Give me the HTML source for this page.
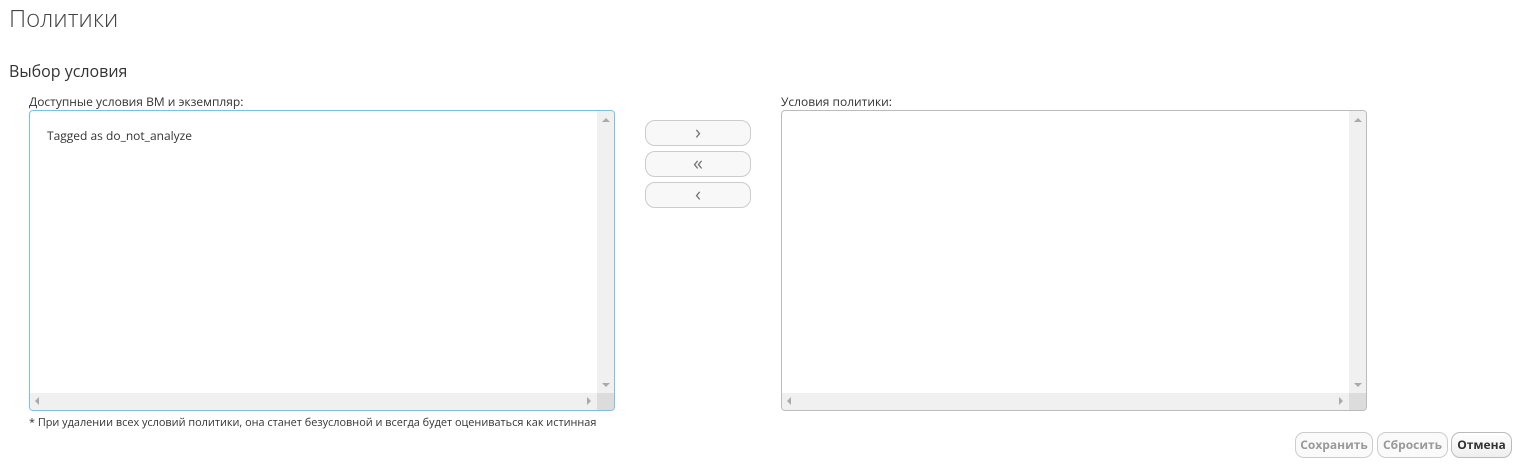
<!DOCTYPE html>
<html><head><meta charset="utf-8"><style>
body{margin:0;width:1522px;height:465px;background:#fff;font-family:"Open Sans","Liberation Sans","DejaVu Sans",sans-serif;color:#333;position:relative;overflow:hidden}
.a{position:absolute}
.box{position:absolute;border:1px solid #bbb;border-radius:4px;background:#fff;overflow:hidden;box-sizing:border-box}
.vs{position:absolute;right:0;top:0;width:17px;bottom:17px;background:#f0f0f0}
.hs{position:absolute;left:0;bottom:0;height:17px;right:17px;background:#f0f0f0}
.cr{position:absolute;right:0;bottom:0;width:17px;height:17px;background:#dcdcdc}
.tri{position:absolute;width:0;height:0}
.btn{position:absolute;box-sizing:border-box;border:1px solid #ccc;border-radius:10px;background:#f8f8f8;color:#777;text-align:center;font-size:20px}
.b2{position:absolute;box-sizing:border-box;border:1px solid #ccc;border-radius:9px;background:#fafafa;color:#999;font-size:12px;font-weight:bold;text-align:center;line-height:24px}
</style></head><body>
<div class="a" style="left:9px;top:2px;font-size:24px;color:#444;font-weight:300">Политики</div>
<div class="a" style="left:9px;top:60px;font-size:16px;color:#333">Выбор условия</div>
<div class="a" style="left:29px;top:93px;font-size:12px;color:#333">Доступные условия ВМ и экземпляр:</div>
<div class="a" style="left:781px;top:93px;font-size:12px;color:#333">Условия политики:</div>

<div class="box" style="left:29px;top:110px;width:586px;height:301px;border-color:#7cc0e8">
 <div class="a" style="left:17px;top:16px;font-size:12px;color:#333">Tagged as do_not_analyze</div>
 <div class="vs"></div><div class="hs"></div><div class="cr"></div>
 <div class="tri" style="right:4px;top:7px;border-left:4px solid transparent;border-right:4px solid transparent;border-bottom:4px solid #aaa"></div>
 <div class="tri" style="right:4px;bottom:23px;border-left:4px solid transparent;border-right:4px solid transparent;border-top:4px solid #aaa"></div>
 <div class="tri" style="left:5px;bottom:5px;border-top:4px solid transparent;border-bottom:4px solid transparent;border-right:4px solid #aaa"></div>
 <div class="tri" style="right:23px;bottom:5px;border-top:4px solid transparent;border-bottom:4px solid transparent;border-left:4px solid #aaa"></div>
</div>

<div class="box" style="left:781px;top:110px;width:586px;height:301px">
 <div class="vs"></div><div class="hs"></div><div class="cr"></div>
 <div class="tri" style="right:4px;top:7px;border-left:4px solid transparent;border-right:4px solid transparent;border-bottom:4px solid #aaa"></div>
 <div class="tri" style="right:4px;bottom:23px;border-left:4px solid transparent;border-right:4px solid transparent;border-top:4px solid #aaa"></div>
 <div class="tri" style="left:5px;bottom:5px;border-top:4px solid transparent;border-bottom:4px solid transparent;border-right:4px solid #aaa"></div>
 <div class="tri" style="right:23px;bottom:5px;border-top:4px solid transparent;border-bottom:4px solid transparent;border-left:4px solid #aaa"></div>
</div>

<div class="btn" style="left:645px;top:120px;width:106px;height:26px;line-height:22px">›</div>
<div class="btn" style="left:645px;top:151px;width:106px;height:26px;line-height:22px">«</div>
<div class="btn" style="left:645px;top:182px;width:106px;height:26px;line-height:22px">‹</div>

<div class="a" style="left:29px;top:415px;font-size:10.9px;color:#333">* При удалении всех условий политики, она станет безусловной и всегда будет оцениваться как истинная</div>

<div class="b2" style="left:1295px;top:432px;width:78px;height:26px">Сохранить</div>
<div class="b2" style="left:1377px;top:432px;width:71px;height:26px">Сбросить</div>
<div class="b2" style="left:1451px;top:432px;width:61px;height:26px;color:#333;background:linear-gradient(#fff,#eee);border-color:#bbb">Отмена</div>
</body></html>
